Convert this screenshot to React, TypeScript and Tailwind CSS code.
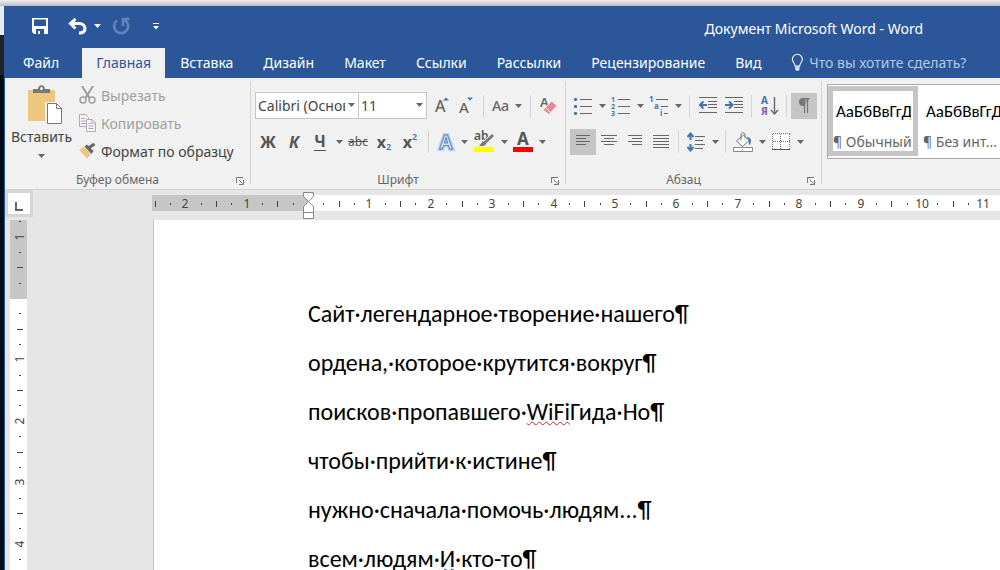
import type { ReactNode } from "react";

const TABS = ["Файл", "Главная", "Вставка", "Дизайн", "Макет", "Ссылки", "Рассылки", "Рецензирование", "Вид"];

const UNIT = 61.4;

function Caret({ light = false }: { light?: boolean }) {
	return (
		<svg width="7" height="4" viewBox="0 0 7 4" className={light ? "text-white" : "text-[#666]"}>
			<path d="M0 0h7L3.5 4z" fill="currentColor" />
		</svg>
	);
}

function CaretButton({ label }: { label: string }) {
	return (
		<button aria-label={label} className="flex h-[26px] w-3 items-center justify-center">
			<Caret />
		</button>
	);
}

function ToolButton({ label, wide = "w-[26px]", active = false, children }: { label: string; wide?: string; active?: boolean; children: ReactNode }) {
	return (
		<button aria-label={label} className={`flex h-[26px] shrink-0 items-center justify-center ${wide} ${active ? "bg-[#c5c5c5]" : ""}`}>
			{children}
		</button>
	);
}

function Separator({ space = "mx-1" }: { space?: string }) {
	return <span className={`h-[22px] w-px shrink-0 bg-[#d2d2d2] ${space}`} />;
}

function Group({ title, children }: { title: string; children: ReactNode }) {
	return (
		<section className="relative flex shrink-0 flex-col justify-between">
			{children}
			<div className="flex h-[18px] items-center justify-center pr-5 text-[12px] leading-4 text-[#666]">{title}</div>
			<button aria-label={`${title}: параметры`} className="absolute right-[6px] bottom-[4px]">
				<svg width="8" height="8" viewBox="0 0 8 8" fill="none" stroke="#777">
					<path d="M.5 6V.5H7M3 3l3.500 3.500M7.500 3v4.500H3" />
				</svg>
			</button>
		</section>
	);
}

function GroupLine() {
	return <span className="mt-[3px] mb-[5px] w-px shrink-0 bg-[#d2d2d2]" />;
}

function Combo({ label, value, size }: { label: string; value: string; size: string }) {
	return (
		<div className={`relative h-[27px] border border-[#c6c6c6] bg-white ${size}`}>
			<select aria-label={label} className="h-full w-full appearance-none overflow-hidden bg-transparent pr-[13px] pl-[2px] text-[14px] text-[#444]">
				<option>{value}</option>
			</select>
			<span className="pointer-events-none absolute top-[10px] right-[3px]">
				<Caret />
			</span>
		</div>
	);
}

/* paragraph lines, each entry is [x1, x2] */
function AlignIcon({ lines }: { lines: number[][] }) {
	return (
		<svg width="18" height="14" viewBox="0 0 18 14" stroke="#666" shapeRendering="crispEdges">
			{lines.map(([a, b], i) => (
				<path key={i} d={`M${a} ${i * 3 + 0.5}H${b}`} />
			))}
		</svg>
	);
}

function ListIcon({ kind }: { kind: "bullets" | "numbers" }) {
	return (
		<svg width="20" height="20" viewBox="0 0 20 20" className="overflow-visible">
			<path d="M7 3.500H19M7 10.500H19M7 17.500H19" stroke="#666" shapeRendering="crispEdges" />
			{[3, 10, 17].map((y, i) =>
				kind === "bullets" ? (
					<rect key={y} x="1" y={y - 1} width="3" height="3" rx="1" fill="#4377ad" />
				) : (
					<text key={y} x="0" y={y + 3} fontSize="7" fontWeight="bold" fill="#4377ad">{i + 1}</text>
				),
			)}
		</svg>
	);
}

function IndentIcon({ right = false }: { right?: boolean }) {
	return (
		<svg width="18" height="17" viewBox="0 0 18 17" fill="none">
			<path d="M0 .5H18M9 4.500H18M9 7.500H18M9 10.500H18M0 15.500H18" stroke="#666" shapeRendering="crispEdges" />
			<path d={right ? "M0 8H7M4 4.500L7.500 8L4 11.500" : "M8 8H1M4.500 4.500L1 8L4.500 11.500"} stroke="#3f73ab" strokeWidth="2" />
		</svg>
	);
}

function TitleBar() {
	return (
		<header className="flex h-[42px] shrink-0 items-center pb-[2px] text-white">
			<button aria-label="Сохранить" className="ml-[27px]">
				<svg width="16" height="16" viewBox="0 0 16 16" fill="#fff">
					<path fillRule="evenodd" d="M0 0h16v16H2l-2-2zM2 1.500V8h12V1.500zM4 11v5h8v-5zM6 13h2v3H6z" />
				</svg>
			</button>
			<button aria-label="Отменить" className="ml-5">
				<svg width="19" height="17" viewBox="0 0 19 17" fill="none" stroke="#fff" strokeWidth="3">
					<path d="M7.500 1L2.500 5.500L7.500 10.500M3 5.500H11C15 5.500 17 8 17 10.500S15 15 11 15" />
				</svg>
			</button>
			<button aria-label="Список отмены" className="ml-[7px]">
				<Caret light />
			</button>
			<button aria-label="Повторить" disabled className="ml-[11px]">
				<svg width="18" height="18" viewBox="0 0 18 18" fill="none" stroke="#5f83bb" strokeWidth="2.600">
					<path d="M12.500 3A7 7 0 1 1 5 3.500M11 9V2H17.500" />
				</svg>
			</button>
			<button aria-label="Настройка панели" className="ml-[23px]">
				<svg width="6" height="7" viewBox="0 0 6 7" fill="#fff">
					<path d="M0 0h6v1H0zM0 3h6L3 6.500z" />
				</svg>
			</button>
			<h1 className="flex-1 pt-1 pr-[77px] text-right text-[14px]">Документ Microsoft Word - Word</h1>
		</header>
	);
}

function TabBar() {
	return (
		<nav className="flex h-[30px] shrink-0 items-stretch pl-1 text-[14px] text-white">
			{TABS.map((tab, i) => (
				<button
					key={tab}
					className={`shrink-0 pb-[2px] ${i === 0 ? "mr-[9px] px-[14px]" : i === 1 ? "bg-[#f1f1f1] px-[14px] text-[#2b579a]" : "px-[15px]"}`}
				>
					{tab}
				</button>
			))}
			<label className="ml-[14px] flex flex-1 items-center gap-1.5 pb-[2px] text-[#b5c7e3]">
				<svg width="14" height="19" viewBox="0 0 14 19" fill="none" stroke="#fff">
					<path d="M4.500 13.500C4.500 10 1.500 9.500 1.500 6a5.500 5.500 0 0 1 11 0c0 3.500-3 4-3 7.500z" strokeWidth="1.200" />
					<path d="M4.500 15.500h5M5 17.500h4" strokeWidth="1.600" />
				</svg>
				<input aria-label="Помощник" placeholder="Что вы хотите сделать?" className="w-full min-w-0 bg-transparent outline-none placeholder:text-[#b5c7e3]" />
			</label>
		</nav>
	);
}

function ClipboardGroup() {
	return (
		<Group title="Буфер обмена">
			<div className="flex w-[245px] pt-1 pl-[5px]">
				<button className="flex w-[63px] flex-col items-center justify-start pt-[3px] text-[14px] leading-[18px] text-[#444]">
					<svg width="36" height="40" viewBox="0 0 36 40" className="ml-1.5">
						<path d="M1 5h27v31H1z" fill="#edc77e" />
						<path d="M6 8V4h5c0-5 7-5 7 0h5v4z" fill="#777" />
						<circle cx="14.500" cy="3.500" r="1.500" fill="#f1f1f1" />
						<path d="M19 17h12l5 5v18H18V17z" fill="#f1f1f1" />
						<path d="M20.500 18.500h9l5 5v15h-14z" fill="#fff" stroke="#777" />
						<path d="M29.500 18.500v5h5" fill="none" stroke="#777" />
					</svg>
					<span className="mt-[3px]">Вставить</span>
					<span className="mt-2">
						<Caret />
					</span>
				</button>
				<div className="-mt-px flex flex-col pl-[6px] text-[14px] text-[#a0a0a0]">
					<button disabled className="flex h-7 items-center gap-[5px]">
						<svg width="17" height="18" viewBox="0 0 17 18" fill="none" stroke="#9c9c9c">
							<path d="M3 0l7.500 12M14 0L6.500 12" strokeWidth="2" />
							<circle cx="4" cy="14" r="3" strokeWidth="1.400" />
							<circle cx="13" cy="14" r="3" strokeWidth="1.400" />
						</svg>
						Вырезать
					</button>
					<button disabled className="flex h-7 items-center gap-[5px]">
						<svg width="17" height="18" viewBox="0 0 17 18" fill="#f7f2f8" stroke="#b4a8b8">
							<path d="M.5 .5h6l3 3v9h-9z" />
							<path d="M2 4.500h4M2 7h5M2 9.500h5" />
							<path d="M7.500 5.500h6l3 3v9h-9z" />
							<path d="M13 5.500v3.500h3.500M9.500 9.500h3M9.500 12h5M9.500 14.500h5" />
						</svg>
						Копировать
					</button>
					<button className="flex h-7 items-center gap-[5px] whitespace-nowrap text-[#444]">
						<svg width="17" height="16" viewBox="0 0 17 16">
							<path d="M0 7l5-3 7 7-4 4.500z" fill="#edc77e" />
							<path d="M5.500 3.500l2.500-2 6.500 6.500-2 3z" fill="#666" />
							<path d="M10 4.500L15.500 1" stroke="#666" strokeWidth="3" />
						</svg>
						Формат по образцу
					</button>
				</div>
			</div>
		</Group>
	);
}

function FontGroup() {
	return (
		<Group title="Шрифт">
			<div className="flex w-[314px] flex-col gap-[10px] pt-[14px] pl-1 text-[#555]">
				<div className="flex h-[27px] items-center">
					<Combo label="Шрифт" value="Calibri (Основной текст)" size="w-[104px]" />
					<Combo label="Размер шрифта" value="11" size="-ml-px w-[69px]" />
					<ToolButton label="Увеличить размер" wide="ml-[3px] w-6">
						<svg width="14" height="17" viewBox="0 0 14 17" className="overflow-visible">
							<text x="0" y="15" fontSize="16" fontWeight="500" fill="#666">А</text>
							<path d="M8 3.500h6L11 .5z" fill="#3f73ab" />
						</svg>
					</ToolButton>
					<ToolButton label="Уменьшить размер" wide="w-6">
						<svg width="14" height="17" viewBox="0 0 14 17" className="overflow-visible">
							<text x="0" y="16" fontSize="15" fontWeight="500" fill="#666">А</text>
							<path d="M8 .5h6L11 3.500z" fill="#3f73ab" />
						</svg>
					</ToolButton>
					<Separator space="mx-[5px]" />
					<button className="flex w-9 items-center justify-center gap-1.5 text-[14px] font-medium text-[#666]">
						Aa <Caret />
					</button>
					<Separator space="mx-[5px]" />
					<ToolButton label="Очистить формат" wide="w-6">
						<svg width="18" height="19" viewBox="0 0 18 19" className="overflow-visible">
							<text x="1" y="11" fontSize="13" fontWeight="600" fill="#666">A</text>
							<path d="M12.500 5l5.500 4.500-8 9-6-4.500z" fill="#e4899b" stroke="#f1f1f1" />
							<path d="M6.500 11.500l5 4.500" stroke="#f1f1f1" />
						</svg>
					</ToolButton>
				</div>
				<div className="flex items-center">
					<ToolButton label="Полужирный"><b className="text-[16px]">Ж</b></ToolButton>
					<ToolButton label="Курсив"><b className="text-[16px] italic">К</b></ToolButton>
					<ToolButton label="Подчеркнутый"><b className="border-b border-[#555] text-[16px] leading-[17px]">Ч</b></ToolButton>
					<CaretButton label="Вид подчеркивания" />
					<ToolButton label="Зачеркнутый"><span className="text-[12px] line-through">abc</span></ToolButton>
					<ToolButton label="Подстрочный"><b className="text-[16px]">x</b><span className="pt-2.5 text-[9px] font-semibold text-[#3f73ab]">2</span></ToolButton>
					<ToolButton label="Надстрочный"><b className="text-[16px]">x</b><span className="pb-2.5 text-[9px] font-semibold text-[#3f73ab]">2</span></ToolButton>
					<Separator space="mx-[5px]" />
					<ToolButton label="Текстовые эффекты" wide="w-6">
						<svg width="18" height="20" viewBox="0 0 18 20" className="overflow-visible">
							<text x="9" y="17" textAnchor="middle" fontSize="19" fontWeight="600" stroke="#b6d3ef" strokeWidth="4" fill="none">A</text>
							<text x="9" y="17" textAnchor="middle" fontSize="19" fontWeight="600" stroke="#4a80bf" strokeWidth="1" fill="#fff">A</text>
						</svg>
					</ToolButton>
					<CaretButton label="Выбор эффекта" />
					<ToolButton label="Цвет выделения" wide="w-7">
						<svg width="20" height="20" viewBox="0 0 20 20" className="overflow-visible">
							<text x="0" y="8" fontSize="12" fontWeight="600" fill="#555">ab</text>
							<path d="M19 3l-8 8" stroke="#f1f1f1" strokeWidth="5" />
							<path d="M19 3l-9 8.500" stroke="#777" strokeWidth="3" />
							<path d="M9 9l3 3-2 2H5z" fill="#777" />
							<path d="M0 15h20v5H0z" fill="#ff0" />
						</svg>
					</ToolButton>
					<CaretButton label="Выбор выделения" />
					<ToolButton label="Цвет текста">
						<svg width="20" height="20" viewBox="0 0 20 20" className="overflow-visible">
							<text x="10" y="13" textAnchor="middle" fontSize="17" fontWeight="bold" fill="#555">A</text>
							<path d="M0 15h20v5H0z" fill="#f00" />
						</svg>
					</ToolButton>
					<CaretButton label="Выбор цвета" />
				</div>
			</div>
		</Group>
	);
}

function ParagraphGroup() {
	return (
		<Group title="Абзац">
			<div className="flex w-[255px] flex-col gap-[10px] pt-[14px] pl-1">
				<div className="flex h-[27px] items-center">
					<ToolButton label="Маркеры"><ListIcon kind="bullets" /></ToolButton>
					<CaretButton label="Выбор маркера" />
					<ToolButton label="Нумерация"><ListIcon kind="numbers" /></ToolButton>
					<CaretButton label="Выбор нумерации" />
					<ToolButton label="Многоуровневый список">
						<svg width="20" height="20" viewBox="0 0 20 20" fontSize="8" fontWeight="bold" fill="#4377ad" className="overflow-visible">
							<path d="M7 3.500H19M12 10.500H19M15 17.500H19" stroke="#666" shapeRendering="crispEdges" />
							<text x="0" y="6">1</text>
							<text x="5" y="13">a</text>
							<text x="11" y="20">i</text>
						</svg>
					</ToolButton>
					<CaretButton label="Выбор списка" />
					<Separator space="mx-[5px]" />
					<ToolButton label="Уменьшить отступ"><IndentIcon /></ToolButton>
					<ToolButton label="Увеличить отступ"><IndentIcon right /></ToolButton>
					<Separator />
					<ToolButton label="Сортировка">
						<svg width="17" height="20" viewBox="0 0 17 20" fontSize="10" fontWeight="bold" className="overflow-visible">
							<text x="0" y="8" fill="#3f73ab">А</text>
							<text x="0" y="19" fill="#8e52a5">Я</text>
							<path d="M13.500 1v17M10 14l3.500 4 3.500-4" fill="none" stroke="#666" strokeWidth="1.400" />
						</svg>
					</ToolButton>
					<Separator />
					<ToolButton label="Отобразить все знаки" active>
						<svg width="12" height="15" viewBox="0 0 12 15">
							<path d="M12 0H5a4 4 0 0 0 0 8h1z" fill="#777" />
							<path d="M6.500 0v15M9.500 0v15" stroke="#777" strokeWidth="1.200" />
							<path d="M8 1.500v6" stroke="#c5c5c5" />
						</svg>
					</ToolButton>
				</div>
				<div className="flex items-center">
					<ToolButton label="По левому краю" active><AlignIcon lines={[[2, 16], [2, 12], [2, 16], [2, 12]]} /></ToolButton>
					<ToolButton label="По центру"><AlignIcon lines={[[1, 17], [4, 14], [1, 17], [4, 14]]} /></ToolButton>
					<ToolButton label="По правому краю"><AlignIcon lines={[[2, 16], [6, 16], [2, 16], [6, 16]]} /></ToolButton>
					<ToolButton label="По ширине"><AlignIcon lines={[[1, 17], [1, 17], [1, 17], [1, 17], [1, 17]]} /></ToolButton>
					<Separator />
					<ToolButton label="Интервал">
						<svg width="18" height="20" viewBox="0 0 18 20" fill="none">
							<path d="M8 4.500H18M8 8.500H16M8 12.500H18M8 16.500H16" stroke="#666" shapeRendering="crispEdges" />
							<path d="M3.500 2v6M3.500 12v6M.5 5l3-3.500 3 3.500M.5 15l3 3.500 3-3.500" stroke="#4377ad" strokeWidth="2" />
						</svg>
					</ToolButton>
					<CaretButton label="Выбор интервала" />
					<Separator />
					<ToolButton label="Заливка">
						<svg width="20" height="20" viewBox="0 0 20 20" fill="none">
							<path d="M3.500 9l7-6 5.500 5.500-6.500 6z" fill="#fff" stroke="#777" />
							<path d="M8 8V3c0-3 4-3 4 0v3" stroke="#777" />
							<path d="M13 5c5 0 6 3 4 8-2-1-1-4-1-5z" fill="#3f73ab" />
							<path d="M.5 15.500h19v4H.5z" fill="#fff" stroke="#888" />
						</svg>
					</ToolButton>
					<CaretButton label="Выбор заливки" />
					<ToolButton label="Границы">
						<svg width="18" height="18" viewBox="0 0 18 18" stroke="#777" fill="none" shapeRendering="crispEdges">
							<path d="M0 0h18v17H0z" fill="#fff" stroke="none" />
							<path d="M.5 .5h17M.5 8.500h17M.5 .5v16M8.500 .5v16M17.500 .5v16" strokeDasharray="1 1" />
							<path d="M0 16.500h18" stroke="#555" />
						</svg>
					</ToolButton>
					<CaretButton label="Выбор границ" />
				</div>
			</div>
		</Group>
	);
}

function StyleCard({ name, active = false }: { name: string; active?: boolean }) {
	return (
		<button className={`flex h-[70px] w-[90px] shrink-0 flex-col overflow-hidden border-[5px] text-left whitespace-nowrap ${active ? "border-[#c5c5c5]" : "border-white"}`}>
			<span className="ml-[3px] w-[75px] overflow-hidden pt-[11px] font-[Carlito,Lato,'Open_Sans',sans-serif] text-[17px] leading-5 text-black">АаБбВвГгДд</span>
			<span className="mt-[11px] text-[14px] leading-[18px] text-[#666]">¶ {name}</span>
		</button>
	);
}

function Ribbon() {
	return (
		<div className="flex h-[112px] shrink-0 overflow-hidden border-b border-[#d2d2d2] bg-[#f1f1f1]">
			<ClipboardGroup />
			<GroupLine />
			<FontGroup />
			<GroupLine />
			<ParagraphGroup />
			<GroupLine />
			<div className="mt-[6px] ml-[5px] flex h-[75px] min-w-0 flex-1 overflow-hidden border border-r-0 border-[#ababab] bg-white pt-px">
				<StyleCard name="Обычный" active />
				<StyleCard name="Без инт..." />
			</div>
		</div>
	);
}

/* One tick per quarter unit: number, dot, half bar, dot */
function ticks(from: number, to: number) {
	return Array.from({ length: to - from + 1 }, (_, i) => from + i).filter((q) => q !== 0);
}

function HorizontalRuler() {
	const zero = 156;
	return (
		<div className="relative ml-[119px] flex-1">
			<svg className="mt-[5px] block h-4 w-full bg-white" fontSize="12" fill="#444">
				<rect width={zero} height="16" fill="#c6c6c6" />
				{ticks(-10, 44).map((q) => {
					const x = Math.round(zero + (q * UNIT) / 4);
					if (q % 4 === 0) return <text key={q} x={x} y="13" textAnchor="middle">{Math.abs(q / 4)}</text>;
					return q % 2 === 0 ? <rect key={q} x={x} y="6" width="1" height="6" /> : <rect key={q} x={x} y="8" width="1" height="2" />;
				})}
			</svg>
			{/* indent markers */}
			<svg width="12" height="28" viewBox="0 0 12 28" className="absolute top-[2px] left-[151px]" fill="#fff" stroke="#888">
				<path d="M.5 .5h10v4L5.500 9.500.5 4.500z" />
				<path d="M5.500 9.500l5 5v6H.5v-6z" />
				<path d="M.5 20.500h10v6H.5z" />
			</svg>
		</div>
	);
}

function VerticalRuler() {
	const zero = 78;
	return (
		<svg className="ml-[5px] h-full w-[17px] shrink-0 bg-white" fontSize="12" fill="#444">
			<rect width="17" height="79" fill="#c6c6c6" />
			{ticks(-5, 21).map((q) => {
				const y = Math.round(zero + (q * UNIT) / 4);
				if (q % 4 === 0) return <text key={q} transform={`translate(14 ${y}) rotate(-90)`} textAnchor="middle">{Math.abs(q / 4)}</text>;
				return q % 2 === 0 ? <rect key={q} x="7" y={y} width="6" height="1" /> : <rect key={q} x="9" y={y} width="2" height="1" />;
			})}
		</svg>
	);
}

function Page() {
	return (
		<main className="ml-[126px] flex-1 overflow-hidden border-l border-[#c6c6c6] bg-white pt-[69px] pl-[154px] font-[Carlito,Lato,'Open_Sans',sans-serif] text-[24px] leading-[49px] whitespace-nowrap text-black">
			<p>Сайт·легендарное·творение·нашего¶</p>
			<p>ордена,·которое·крутится·вокруг¶</p>
			<p>
				поисков·пропавшего·<span className="underline decoration-[#e02020] decoration-wavy decoration-1 underline-offset-1">WiFi</span>Гида·Но¶
			</p>
			<p>чтобы·прийти·к·истине¶</p>
			<p>нужно·сначала·помочь·людям...¶</p>
			<p>
				всем·людям·<span className="underline decoration-[#3030d0] decoration-wavy decoration-1 underline-offset-1">И</span>·кто-то¶
			</p>
		</main>
	);
}

export default function App() {
	return (
		<div className="flex h-screen flex-col overflow-hidden bg-[#020b18] font-['Noto_Sans','Open_Sans',sans-serif]">
			<div className="h-[6px] shrink-0 bg-linear-to-b from-[#eeeeee] to-[#b9bcc0]" />
			<div className="flex min-h-0 flex-1">
				<div className="flex w-1 shrink-0 flex-col">
					<span className="h-[29px] bg-[#e9ebee]" />
					<span className="h-[40px] bg-[#202327]" />
				</div>
				<div className="flex min-w-0 flex-1 flex-col border-l border-[#2b579a] bg-[#2b579a]">
					<TitleBar />
					<TabBar />
					<Ribbon />
					<div className="flex min-h-0 flex-1 flex-col bg-[#e6e6e6]">
						<div className="flex h-[30px] shrink-0">
							<button aria-label="Табуляция" className="flex h-[27px] w-7 items-center justify-center border-[3px] border-[#d6d6d6] bg-white">
								<svg width="8" height="9" viewBox="0 0 8 9" className="mt-1.5">
									<path d="M1 0v8h7" fill="none" stroke="#666" strokeWidth="2" />
								</svg>
							</button>
							<HorizontalRuler />
						</div>
						<div className="flex min-h-0 flex-1">
							<VerticalRuler />
							<Page />
						</div>
					</div>
				</div>
			</div>
		</div>
	);
}
